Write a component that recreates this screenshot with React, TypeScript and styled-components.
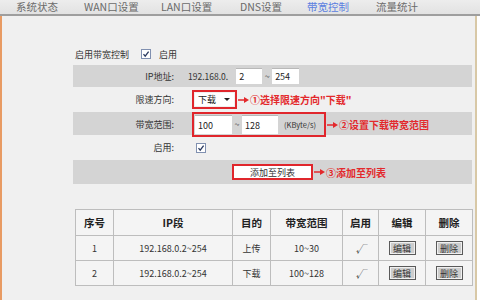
import styled, { createGlobalStyle } from 'styled-components'

const GlobalStyle = createGlobalStyle`
  html, body {
    margin: 0;
    padding: 0;
    background: #fff;
  }
  body {
    font-family: "Noto Sans CJK SC", "Liberation Sans", sans-serif;
  }
`

const Frame = styled.div`
  width: 480px;
  height: 300px;
  overflow: hidden;
  display: flex;
  flex-direction: column;
  background: #fff;
`

const TabBar = styled.nav`
  flex: none;
  height: 14px;
  display: flex;
  align-items: center;
  padding-left: 16px;
  background: linear-gradient(#ededed, #e2e2e2);
  border-bottom: 2px solid #9e9e9e;
`

const Tab = styled.span<{ $w?: number; $active?: boolean }>`
  width: ${p => (p.$w ? `${p.$w}px` : 'auto')};
  flex: none;
  font-size: 10.5px;
  line-height: 14px;
  white-space: nowrap;
  color: ${p => (p.$active ? '#5b80e0' : '#6a6a6a')};
`

const Panel = styled.main`
  flex: 1;
  margin-right: 3px;
  padding: 29px 3px 0 71px;
  display: flex;
  flex-direction: column;
  background: #f0f0f0;
  border-left: 2px solid #e89b63;
  border-right: 2px solid #d8c8a6;
`

const Form = styled.section`
  display: flex;
  flex-direction: column;
  gap: 2px;
`

const EnableRow = styled.div`
  height: 18px;
  display: flex;
  align-items: center;
  padding-left: 2px;
  font-size: 9px;
  color: #333;
`

const FieldRow = styled.div<{ $shade?: boolean; $h: number }>`
  height: ${p => p.$h}px;
  display: grid;
  grid-template-columns: 103px auto;
  column-gap: 12px;
  align-items: center;
  background: ${p => (p.$shade ? '#d4d4d4' : 'transparent')};
`

const Label = styled.span`
  text-align: right;
  padding-right: 2px;
  font-size: 9px;
  color: #333;
`

const Value = styled.div<{ $indent?: number }>`
  display: flex;
  align-items: center;
  padding-left: ${p => p.$indent ?? 0}px;
  font-size: 9px;
  color: #333;
`

const IpPrefix = styled.span`
  font-size: 8.5px;
  margin-right: 8px;
`

const TextBox = styled.span<{ $w: number; $h: number }>`
  width: ${p => p.$w}px;
  height: ${p => p.$h}px;
  box-sizing: border-box;
  display: flex;
  align-items: center;
  padding-left: 3px;
  background: #fff;
  border-top: 1px solid #b8b8b8;
  font-size: 9px;
  color: #222;
`

const Tilde = styled.span`
  width: 10px;
  text-align: center;
  font-size: 9px;
  color: #444;
`

const RedBox = styled.div<{ $pad?: string }>`
  display: flex;
  align-items: center;
  padding: ${p => p.$pad ?? '1px'};
  border: 2px solid #e0262c;
`

const Select = styled.span`
  width: 39px;
  height: 13px;
  display: flex;
  align-items: center;
  justify-content: space-between;
  padding: 0 4px 0 3px;
  box-sizing: border-box;
  background: #fff;
  font-size: 9px;
  color: #222;
`

const Caret = styled.span`
  width: 0;
  height: 0;
  border-left: 3px solid transparent;
  border-right: 3px solid transparent;
  border-top: 3px solid #222;
`

const Unit = styled.span`
  margin: 0 8px 0 6px;
  font-size: 7.5px;
  color: #333;
`

const Callout = styled.span`
  display: flex;
  align-items: center;
  margin-left: 1px;
  font-size: 10px;
  font-weight: bold;
  color: #e3292c;
  white-space: nowrap;
`

const AddButton = styled.span`
  width: 77px;
  height: 12px;
  display: flex;
  align-items: center;
  justify-content: center;
  background: #fff;
  font-size: 9px;
  color: #333;
`

const Table = styled.table`
  margin: 25px 0 0 2px;
  width: 397px;
  border-collapse: collapse;
  table-layout: fixed;
  border: 1px solid #b4b4b4;

  th,
  td {
    border: 1px solid #bdbdbd;
    background: #f4f4f4;
    text-align: center;
    padding: 0;
    color: #333;
  }
  th {
    height: 25px;
    font-size: 10.5px;
    font-weight: bold;
    color: #222;
  }
  td {
    height: 24px;
    font-size: 9px;
  }
`

const CellButton = styled.span`
  display: inline-flex;
  align-items: center;
  justify-content: center;
  width: 27px;
  height: 14px;
  box-sizing: border-box;
  background: #cdcdcd;
  border: 1px solid #5a5a5a;
  box-shadow: inset 0 0 0 1px #f0f0f0;
  font-size: 9px;
  color: #333;
  vertical-align: middle;
`

const Check = styled.span`
  font-style: italic;
  font-size: 10px;
  color: #333;
`

function CheckBox({ gap = 0 }: { gap?: number }) {
  return (
    <svg width="10" height="10" viewBox="0 0 10 10" style={{ marginRight: gap }}>
      <rect x="0.5" y="0.5" width="9" height="9" fill="#fff" stroke="#8090b0" />
      <path d="M2.5 5.2 L4.2 7.2 L7.6 2.6" fill="none" stroke="#2a3a60" strokeWidth="1.3" />
    </svg>
  )
}

function Arrow() {
  return (
    <svg width="12" height="8" viewBox="0 0 12 8">
      <line x1="0" y1="4" x2="7" y2="4" stroke="#e3292c" strokeWidth="1.5" />
      <path d="M6 1 L11 4 L6 7 Z" fill="#e3292c" />
    </svg>
  )
}

const tabs = [
  { name: '系统状态', w: 68 },
  { name: 'WAN口设置', w: 77 },
  { name: 'LAN口设置', w: 79 },
  { name: 'DNS设置', w: 67 },
  { name: '带宽控制', w: 69, active: true },
  { name: '流量统计' },
]

const rules = [
  { id: 1, ip: '192.168.0.2~254', dir: '上传', range: '10~30' },
  { id: 2, ip: '192.168.0.2~254', dir: '下载', range: '100~128' },
]

export default function App() {
  return (
    <>
      <GlobalStyle />
      <Frame>
        <TabBar>
          {tabs.map(t => (
            <Tab key={t.name} $w={t.w} $active={t.active}>
              {t.name}
            </Tab>
          ))}
        </TabBar>
        <Panel>
          <Form>
            <EnableRow>
              <span style={{ marginRight: 12 }}>启用带宽控制</span>
              <CheckBox gap={8} />
              <span>启用</span>
            </EnableRow>
            <FieldRow $shade $h={22}>
              <Label>IP地址:</Label>
              <Value>
                <IpPrefix>192.168.0.</IpPrefix>
                <TextBox $w={26} $h={16}>2</TextBox>
                <Tilde>~</Tilde>
                <TextBox $w={27} $h={16}>254</TextBox>
              </Value>
            </FieldRow>
            <FieldRow $h={21}>
              <Label>限速方向:</Label>
              <Value $indent={4}>
                <RedBox>
                  <Select>
                    下载
                    <Caret />
                  </Select>
                </RedBox>
                <Callout>
                  <Arrow />
                  ①选择限速方向"下载"
                </Callout>
              </Value>
            </FieldRow>
            <FieldRow $shade $h={23}>
              <Label>带宽范围:</Label>
              <Value $indent={4}>
                <RedBox $pad="1px 0 1px 1px">
                  <TextBox $w={37} $h={19}>100</TextBox>
                  <Tilde>~</Tilde>
                  <TextBox $w={36} $h={19}>128</TextBox>
                  <Unit>(KByte/s)</Unit>
                </RedBox>
                <Callout>
                  <Arrow />
                  ②设置下载带宽范围
                </Callout>
              </Value>
            </FieldRow>
            <FieldRow $h={21}>
              <Label>启用:</Label>
              <Value $indent={8}>
                <CheckBox />
              </Value>
            </FieldRow>
            <FieldRow $shade $h={24}>
              <span />
              <Value $indent={44}>
                <RedBox $pad="0">
                  <AddButton>添加至列表</AddButton>
                </RedBox>
                <Callout>
                  <Arrow />
                  ③添加至列表
                </Callout>
              </Value>
            </FieldRow>
          </Form>
          <Table>
            <colgroup>
              <col style={{ width: 38 }} />
              <col style={{ width: 119 }} />
              <col style={{ width: 38 }} />
              <col style={{ width: 72 }} />
              <col style={{ width: 36 }} />
              <col style={{ width: 47 }} />
              <col style={{ width: 47 }} />
            </colgroup>
            <thead>
              <tr>
                <th>序号</th>
                <th>IP段</th>
                <th>目的</th>
                <th>带宽范围</th>
                <th>启用</th>
                <th>编辑</th>
                <th>删除</th>
              </tr>
            </thead>
            <tbody>
              {rules.map(r => (
                <tr key={r.id}>
                  <td>{r.id}</td>
                  <td>{r.ip}</td>
                  <td>{r.dir}</td>
                  <td>{r.range}</td>
                  <td>
                    <Check>√</Check>
                  </td>
                  <td>
                    <CellButton>编辑</CellButton>
                  </td>
                  <td>
                    <CellButton>删除</CellButton>
                  </td>
                </tr>
              ))}
            </tbody>
          </Table>
        </Panel>
      </Frame>
    </>
  )
}
